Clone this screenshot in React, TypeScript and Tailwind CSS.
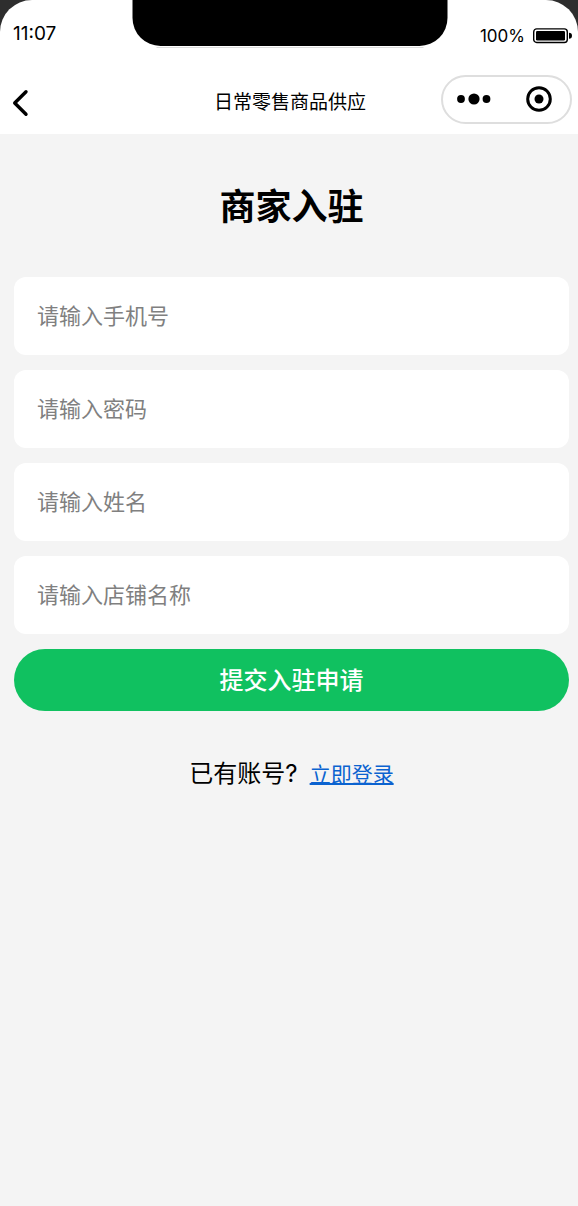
import { useState } from "react";

const fields = [
  { name: "phone", label: "请输入手机号", type: "tel" },
  { name: "password", label: "请输入密码", type: "password" },
  { name: "realName", label: "请输入姓名", type: "text" },
  { name: "shopName", label: "请输入店铺名称", type: "text" },
];

const BatteryIcon = () => (
  <svg width="40" height="16" viewBox="0 0 40 16" fill="none" aria-hidden="true">
    <rect x="0.7" y="0.9" width="33.6" height="13.6" rx="3" stroke="#000" strokeWidth="1.4" />
    <rect x="3" y="3" width="29" height="9.5" rx="1.2" fill="#000" />
    <path d="M36 4.7c2 0 3 1.3 3 3s-1 3-3 3z" fill="#000" />
  </svg>
);

const StatusBar = () => (
  <div className="relative flex h-[68px] items-center justify-between pl-[13px] pr-[5px]">
    <span className="text-[19px]">11:07</span>
    <div className="absolute left-1/2 top-0 ml-px h-[46px] w-[315px] -translate-x-1/2 rounded-b-[28px] bg-black after:absolute after:inset-x-6 after:top-[47px] after:h-px after:bg-[#dcdcdc]" />
    <div className="flex items-center gap-2 pt-1">
      <span className="pt-0.5 text-[17px]">100%</span>
      <BatteryIcon />
    </div>
  </div>
);

const NavBar = () => (
  <div className="grid h-[66px] grid-cols-[1fr_auto_1fr] items-center pb-1 pl-2 pr-1.5">
    <button type="button" aria-label="返回" className="justify-self-start pl-[3px] pt-2">
      <svg width="18" height="28" viewBox="0 0 18 28" fill="none" aria-hidden="true">
        <path d="M15 2.7 3.7 14 15 25.3" stroke="#000" strokeWidth="3.4" strokeLinecap="round" strokeLinejoin="round" />
      </svg>
    </button>
    <p className="pt-2 text-[19px]">日常零售商品供应</p>
    <div className="flex h-[49px] w-[131px] items-center justify-self-end rounded-full border-2 border-[#dedede]">
      <button type="button" aria-label="更多" className="flex flex-1 justify-center">
        <svg width="36" height="12" viewBox="0 0 36 12" aria-hidden="true">
          <circle cx="5" cy="6" r="3.9" />
          <circle cx="18" cy="6" r="5.6" />
          <circle cx="30.5" cy="6" r="3.9" />
        </svg>
      </button>
      <button type="button" aria-label="关闭" className="flex flex-1 justify-center pl-1">
        <svg width="26" height="26" viewBox="0 0 26 26" aria-hidden="true">
          <circle cx="13" cy="13" r="11.3" fill="none" stroke="#000" strokeWidth="3" />
          <circle cx="13" cy="13" r="4.5" />
        </svg>
      </button>
    </div>
  </div>
);

const RegisterForm = () => {
  const [values, setValues] = useState<Record<string, string>>({});

  return (
    <form className="mt-[43px] flex flex-col gap-[15px]" onSubmit={(e) => e.preventDefault()}>
      {fields.map((field) => (
        <input
          key={field.name}
          type={field.type}
          name={field.name}
          aria-label={field.label}
          placeholder={field.label}
          value={values[field.name] ?? ""}
          onChange={(e) => setValues({ ...values, [field.name]: e.target.value })}
          className="h-[78px] w-full rounded-xl bg-white px-[23px] text-[22px] outline-none placeholder:text-[#808080]"
        />
      ))}
      <button type="submit" className="h-[62px] w-full rounded-full bg-[#10c160] pt-0.5 text-2xl font-medium text-white">
        提交入驻申请
      </button>
    </form>
  );
};

const App = () => {
  return (
    <div className="flex min-h-screen flex-col bg-[#2e2e2e] font-['Inter','Noto_Sans_CJK_SC',sans-serif] text-black">
      <header className="rounded-t-[32px] bg-white">
        <StatusBar />
        <NavBar />
      </header>
      <main className="flex-1 bg-[#f4f4f4] pb-10 pl-[14px] pr-[9px] pt-[46px]">
        <h1 className="text-center text-4xl/[54px] font-bold">商家入驻</h1>
        <RegisterForm />
        <p className="mt-[45px] flex items-baseline justify-center gap-3 text-2xl/9">
          <span>已有账号?</span>
          <a href="#login" className="text-[21px] text-[#0b63d0] underline decoration-2">
            立即登录
          </a>
        </p>
      </main>
    </div>
  );
};

export default App;
